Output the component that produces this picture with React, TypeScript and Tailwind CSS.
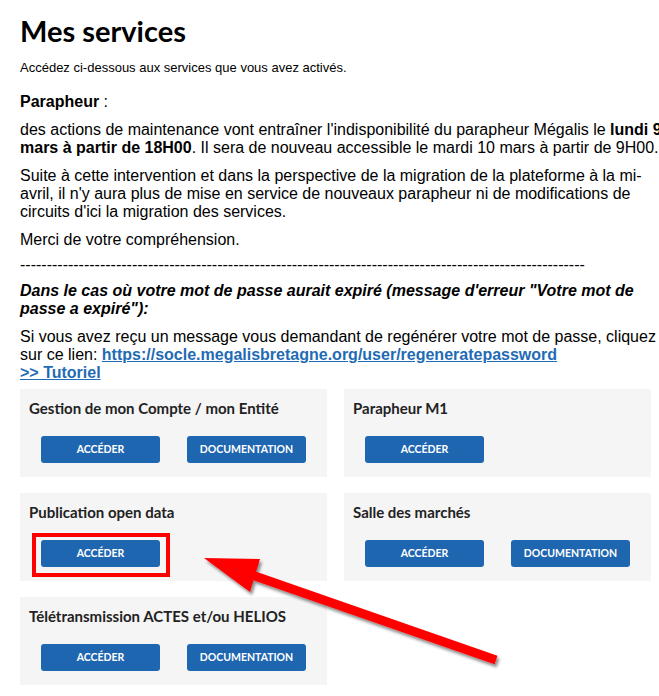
import React from "react";

const body = { fontFamily: '"Liberation Sans", Arial, sans-serif' };
const heading = { fontFamily: 'Lato, "Noto Sans", sans-serif' };

type Service = { title: string; doc: boolean; boxed?: boolean };

const services: Service[] = [
  { title: "Gestion de mon Compte / mon Entité", doc: true },
  { title: "Parapheur M1", doc: false },
  { title: "Publication open data", doc: false, boxed: true },
  { title: "Salle des marchés", doc: true },
  { title: "Télétransmission ACTES et/ou HELIOS", doc: true },
];

function Btn({ label }: { label: string }) {
  return (
    <button
      className="w-[119px] h-[27px] rounded-[3px] bg-[#1f66b1] text-white text-[10.5px] font-bold uppercase"
      style={heading}
    >
      {label}
    </button>
  );
}

function Card({ s }: { s: Service }) {
  return (
    <div className="h-[88px] bg-[#f5f5f5] pt-[10px] pl-[9px]">
      <h3 className="text-[15px] font-bold text-[#222] leading-[18px]" style={heading}>
        {s.title}
      </h3>
      <div className="flex gap-[27px] pl-[12px] mt-[19px]">
        <div className="relative">
          <Btn label="Accéder" />
          {s.boxed && (
            <div className="absolute left-[-9px] top-[-7px] w-[138px] h-[44px] border-4 border-[#ff0000]" />
          )}
        </div>
        {s.doc && <Btn label="Documentation" />}
      </div>
    </div>
  );
}

export default function App() {
  return (
    <div className="relative w-[659px] h-[696px] overflow-hidden bg-white text-black" style={body}>
      <div className="w-[720px] pl-5 pt-[14px]">
        <h1 className="text-[29px] font-bold leading-[34px]" style={heading}>
          Mes services
        </h1>
        <p className="text-[13px] leading-[15px] mt-[12px]">
          Accédez ci-dessous aux services que vous avez activés.
        </p>

        <div className="text-[16px] leading-[18px] mt-[18px] whitespace-nowrap">
          <p className="mb-[10px]">
            <strong>Parapheur</strong> :
          </p>
          <p className="mb-[10px]">
            des actions de maintenance vont entraîner l'indisponibilité du parapheur Mégalis le{" "}
            <strong>lundi 9</strong>
            <br />
            <strong>mars à partir de 18H00</strong>. Il sera de nouveau accessible le mardi 10 mars à partir de 9H00.
          </p>
          <p className="mb-[10px]">
            Suite à cette intervention et dans la perspective de la migration de la plateforme à la mi-
            <br />
            avril, il n'y aura plus de mise en service de nouveaux parapheur ni de modifications de
            <br />
            circuits d'ici la migration des services.
          </p>
          <p className="mb-[7px]">Merci de votre compréhension.</p>
          <p className="mb-[8px]">{"-".repeat(106)}</p>
          <p className="mb-[10px] font-bold italic">
            Dans le cas où votre mot de passe aurait expiré (message d'erreur "Votre mot de
            <br />
            passe a expiré"):
          </p>
          <p>
            Si vous avez reçu un message vous demandant de regénérer votre mot de passe, cliquez
            <br />
            sur ce lien:{" "}
            <a href="#" className="font-bold underline text-[#1f6bb5]">
              https://socle.megalisbretagne.org/user/regeneratepassword
            </a>
            <br />
            <a href="#" className="font-bold underline text-[#1f6bb5]">
              &gt;&gt; Tutoriel
            </a>
          </p>
        </div>

        <div className="grid grid-cols-[307px_307px] gap-x-[17px] gap-y-[16px] mt-[7px]">
          {services.map((s) => (
            <Card key={s.title} s={s} />
          ))}
        </div>
      </div>

      <svg className="absolute inset-0 pointer-events-none" width="659" height="696" viewBox="0 0 659 696">
        <defs>
          <filter id="sh" x="-20%" y="-20%" width="140%" height="140%">
            <feDropShadow dx="2" dy="3" stdDeviation="1.6" floodColor="#000" floodOpacity="0.45" />
          </filter>
        </defs>
        <g filter="url(#sh)" fill="#ff0000" stroke="none">
          <polygon points="204,558 260,559 250,592" />
          <line x1="252" y1="575" x2="496" y2="660" stroke="#ff0000" strokeWidth="9" />
        </g>
      </svg>
    </div>
  );
}
